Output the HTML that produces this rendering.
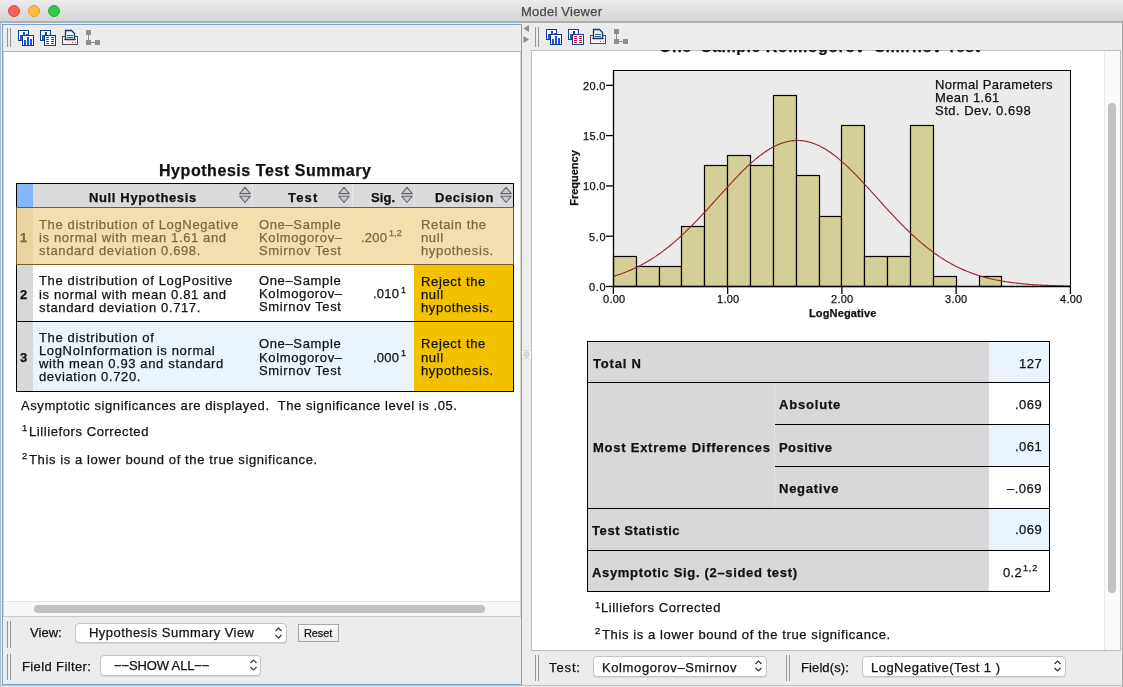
<!DOCTYPE html>
<html><head><meta charset="utf-8"><style>
*{box-sizing:border-box;margin:0;padding:0}
html,body{width:1123px;height:687px;overflow:hidden;background:#ececec;font-family:"Liberation Sans",sans-serif;color:#111}
.a{position:absolute}
.t{position:absolute;white-space:pre;line-height:1;will-change:transform;-webkit-text-stroke:0.25px currentColor}
.dot{position:absolute;top:5px;width:12px;height:12px;border-radius:50%}
.grip{position:absolute;width:4px;border-left:1px solid #959595;border-right:1px solid #959595}
</style></head><body>
<div class="a" style="left:0;top:0;width:1123px;height:23px;background:linear-gradient(#ececec,#d6d6d6 90%);border-bottom:2px solid #b0b0b0;border-radius:5px 5px 0 0"></div>
<div class="a" style="left:1122px;top:22px;width:1px;height:665px;background:#a8a8a8"></div>
<div class="dot" style="left:8px;background:#fc605c;border:1px solid #df4744"></div>
<div class="dot" style="left:28px;background:#fdbc40;border:1px solid #de9f34"></div>
<div class="dot" style="left:48px;background:#34c84a;border:1px solid #27a83a"></div>
<div class="a" style="left:0;top:23px;width:1px;height:664px;background:#b8b8b8"></div>
<div class="a" style="left:2px;top:24px;width:520px;height:661px;border:1px solid #72a3d6;background:#ececec"></div>
<div class="grip" style="left:7px;top:28px;height:19px"></div>
<div class="a" style="left:3px;top:51px;width:518px;height:1px;background:#b5b5b5"></div>
<div class="a" style="left:3px;top:52px;width:518px;height:549px;background:#fff"></div>
<div class="a" style="left:3px;top:601px;width:518px;height:16px;background:#f7f7f7;border-top:1px solid #e6e6e6"></div>
<div class="a" style="left:3px;top:52px;width:1px;height:565px;background:#d6d2d0"></div>
<div class="a" style="left:520px;top:52px;width:1px;height:565px;background:#d6d2d0"></div>
<div class="a" style="left:34px;top:605px;width:451px;height:8px;border-radius:4px;background:#c2c2c2"></div>
<div class="a" style="left:3px;top:616px;width:518px;height:1px;background:#c9c9c9"></div>
<svg class="a" width="90" height="22" viewBox="0 0 90 22" style="left:16px;top:27px" shape-rendering="crispEdges">
<rect x="2.5" y="3.5" width="10" height="10" fill="#fff" stroke="#0d3d91" stroke-width="1.3"/>
<rect x="4" y="8" width="2" height="5" fill="#1f52d6"/><rect x="7" y="5" width="2" height="8" fill="#1f52d6"/><rect x="10" y="7" width="2" height="6" fill="#1f52d6"/>
<rect x="6.5" y="8.5" width="11" height="10" fill="#fff" stroke="#0d3d91" stroke-width="1.3"/>
<rect x="8" y="13" width="2" height="5" fill="#1f52d6"/><rect x="11" y="10" width="2" height="8" fill="#1f52d6"/><rect x="14" y="12" width="2" height="6" fill="#1f52d6"/>
<rect x="24.5" y="3.5" width="10" height="10" fill="#eef8ff" stroke="#0d3d91" stroke-width="1.3"/>
<rect x="26" y="8" width="2" height="5" fill="#3a4fb0"/><rect x="29" y="5" width="2" height="8" fill="#1e3f70"/>
<rect x="28.5" y="8.5" width="11" height="10" fill="#f3fbff" stroke="#0d3d91" stroke-width="1.3"/>
<rect x="30" y="10" width="3" height="1.2" fill="#d4143c"/><rect x="35" y="10" width="3" height="1.2" fill="#d4143c"/>
<rect x="30" y="12" width="3" height="1.2" fill="#d4143c"/><rect x="35" y="12" width="3" height="1.2" fill="#d4143c"/>
<rect x="30" y="14" width="3" height="1.2" fill="#d4143c"/><rect x="35" y="14" width="3" height="1.2" fill="#d4143c"/>
<rect x="30" y="16" width="3" height="1.2" fill="#d4143c"/><rect x="35" y="16" width="3" height="1.2" fill="#d4143c"/>
<rect x="46.5" y="9.5" width="15" height="8" fill="#f4f2f0" stroke="#584c4a" stroke-width="1.2"/>
<rect x="48" y="12" width="12" height="1" fill="#6a5e5c"/>
<path d="M49.5 3.5 H55.5 L58.5 6.5 V12.5 H49.5 Z" fill="#e8eef8" stroke="#0f3e6a" stroke-width="1.3" shape-rendering="auto"/>
<rect x="51" y="8" width="6" height="0.8" fill="#3b5f86"/><rect x="51" y="10" width="6" height="0.8" fill="#3b5f86"/>
<rect x="56" y="14.5" width="1.2" height="1.2" fill="#f02020"/><rect x="58.5" y="14.8" width="1.6" height="0.8" fill="#30b030"/>
<rect x="70" y="3" width="5" height="5" fill="#8e8e8e"/><rect x="72" y="8" width="1" height="5" fill="#8e8e8e"/>
<rect x="70" y="13" width="5" height="5" fill="#8e8e8e"/><rect x="75" y="15" width="4" height="1" fill="#8e8e8e"/>
<rect x="79" y="13" width="5" height="5" fill="#8e8e8e"/>
</svg>
<div class="grip" style="left:7px;top:621px;height:27px"></div>
<div class="grip" style="left:7px;top:654px;height:26px"></div>
<div class="a" style="left:531px;top:50px;width:590px;height:601px;border:1px solid #bdbdbd;background:#fff"></div>
<div class="grip" style="left:535px;top:27px;height:20px"></div>
<svg class="a" width="90" height="22" viewBox="0 0 90 22" style="left:544px;top:26px" shape-rendering="crispEdges">
<rect x="2.5" y="3.5" width="10" height="10" fill="#fff" stroke="#0d3d91" stroke-width="1.3"/>
<rect x="4" y="8" width="2" height="5" fill="#1f52d6"/><rect x="7" y="5" width="2" height="8" fill="#1f52d6"/><rect x="10" y="7" width="2" height="6" fill="#1f52d6"/>
<rect x="6.5" y="8.5" width="11" height="10" fill="#fff" stroke="#0d3d91" stroke-width="1.3"/>
<rect x="8" y="13" width="2" height="5" fill="#1f52d6"/><rect x="11" y="10" width="2" height="8" fill="#1f52d6"/><rect x="14" y="12" width="2" height="6" fill="#1f52d6"/>
<rect x="24.5" y="3.5" width="10" height="10" fill="#eef8ff" stroke="#0d3d91" stroke-width="1.3"/>
<rect x="26" y="8" width="2" height="5" fill="#3a4fb0"/><rect x="29" y="5" width="2" height="8" fill="#1e3f70"/>
<rect x="28.5" y="8.5" width="11" height="10" fill="#f3fbff" stroke="#0d3d91" stroke-width="1.3"/>
<rect x="30" y="10" width="3" height="1.2" fill="#d4143c"/><rect x="35" y="10" width="3" height="1.2" fill="#d4143c"/>
<rect x="30" y="12" width="3" height="1.2" fill="#d4143c"/><rect x="35" y="12" width="3" height="1.2" fill="#d4143c"/>
<rect x="30" y="14" width="3" height="1.2" fill="#d4143c"/><rect x="35" y="14" width="3" height="1.2" fill="#d4143c"/>
<rect x="30" y="16" width="3" height="1.2" fill="#d4143c"/><rect x="35" y="16" width="3" height="1.2" fill="#d4143c"/>
<rect x="46.5" y="9.5" width="15" height="8" fill="#f4f2f0" stroke="#584c4a" stroke-width="1.2"/>
<rect x="48" y="12" width="12" height="1" fill="#6a5e5c"/>
<path d="M49.5 3.5 H55.5 L58.5 6.5 V12.5 H49.5 Z" fill="#e8eef8" stroke="#0f3e6a" stroke-width="1.3" shape-rendering="auto"/>
<rect x="51" y="8" width="6" height="0.8" fill="#3b5f86"/><rect x="51" y="10" width="6" height="0.8" fill="#3b5f86"/>
<rect x="56" y="14.5" width="1.2" height="1.2" fill="#f02020"/><rect x="58.5" y="14.8" width="1.6" height="0.8" fill="#30b030"/>
<rect x="70" y="3" width="5" height="5" fill="#8e8e8e"/><rect x="72" y="8" width="1" height="5" fill="#8e8e8e"/>
<rect x="70" y="13" width="5" height="5" fill="#8e8e8e"/><rect x="75" y="15" width="4" height="1" fill="#8e8e8e"/>
<rect x="79" y="13" width="5" height="5" fill="#8e8e8e"/>
</svg>
<div class="grip" style="left:535px;top:655px;height:26px"></div>
<div class="grip" style="left:786px;top:655px;height:26px"></div>
<div class="a" style="left:0;top:685px;width:1123px;height:1px;background:#c0c0c0"></div>
<div class="a" style="left:16px;top:183px;width:498px;height:1px;background:#000;"></div>
<div class="a" style="left:16px;top:184px;width:1px;height:24px;background:#000;"></div>
<div class="a" style="left:513px;top:184px;width:1px;height:24px;background:#000;"></div>
<div class="a" style="left:17px;top:184px;width:16px;height:23px;background:#83b7fb;"></div>
<div class="a" style="left:33px;top:184px;width:480px;height:23px;background:#d9dadc;"></div>
<div class="a" style="left:252px;top:184px;width:1px;height:23px;background:#e6e6e8;"></div>
<div class="a" style="left:352px;top:184px;width:1px;height:23px;background:#e6e6e8;"></div>
<div class="a" style="left:414px;top:184px;width:1px;height:23px;background:#e6e6e8;"></div>
<div class="a" style="left:16px;top:207px;width:498px;height:1px;background:#7b5d2b;"></div>
<div class="a" style="left:16px;top:208px;width:1px;height:56px;background:#7b5d2b;"></div>
<div class="a" style="left:513px;top:208px;width:1px;height:56px;background:#7b5d2b;"></div>
<div class="a" style="left:17px;top:208px;width:16px;height:56px;background:#e8d3a2;"></div>
<div class="a" style="left:33px;top:208px;width:480px;height:56px;background:#f3dfae;"></div>
<div class="a" style="left:252px;top:208px;width:1px;height:56px;background:#f0dba9;"></div>
<div class="a" style="left:352px;top:208px;width:1px;height:56px;background:#f0dba9;"></div>
<div class="a" style="left:414px;top:208px;width:1px;height:56px;background:#f0dba9;"></div>
<div class="a" style="left:16px;top:264px;width:498px;height:1px;background:#7b5d2b;"></div>
<div class="a" style="left:16px;top:265px;width:1px;height:56px;background:#000;"></div>
<div class="a" style="left:513px;top:265px;width:1px;height:56px;background:#000;"></div>
<div class="a" style="left:17px;top:265px;width:16px;height:56px;background:#d8d8d8;"></div>
<div class="a" style="left:33px;top:265px;width:480px;height:56px;background:#ffffff;"></div>
<div class="a" style="left:414px;top:265px;width:99px;height:56px;background:#f2c200;"></div>
<div class="a" style="left:16px;top:321px;width:498px;height:1px;background:#000;"></div>
<div class="a" style="left:16px;top:322px;width:1px;height:70px;background:#000;"></div>
<div class="a" style="left:513px;top:322px;width:1px;height:70px;background:#000;"></div>
<div class="a" style="left:17px;top:322px;width:16px;height:69px;background:#d8d8d8;"></div>
<div class="a" style="left:33px;top:322px;width:480px;height:69px;background:#eaf4fd;"></div>
<div class="a" style="left:414px;top:322px;width:99px;height:69px;background:#f2c200;"></div>
<div class="a" style="left:16px;top:391px;width:498px;height:1px;background:#000;"></div>
<div class="a" style="left:1104px;top:51px;width:16px;height:599px;background:#fafafa;border-left:1px solid #e8e8e8;"></div>
<div class="a" style="left:1108px;top:103px;width:8px;height:490px;background:#c2c2c2;border-radius:4px;"></div>
<div class="a" style="left:587px;top:341px;width:463px;height:1px;background:#000;"></div>
<div class="a" style="left:587px;top:341px;width:1px;height:251px;background:#000;"></div>
<div class="a" style="left:1049px;top:341px;width:1px;height:251px;background:#000;"></div>
<div class="a" style="left:588px;top:342px;width:401px;height:249px;background:#d8d8da;"></div>
<div class="a" style="left:989px;top:342px;width:60px;height:40px;background:#eaf4fe;"></div>
<div class="a" style="left:989px;top:383px;width:60px;height:41px;background:#fff;"></div>
<div class="a" style="left:989px;top:425px;width:60px;height:41px;background:#eaf4fe;"></div>
<div class="a" style="left:989px;top:467px;width:60px;height:41px;background:#fff;"></div>
<div class="a" style="left:989px;top:509px;width:60px;height:41px;background:#eaf4fe;"></div>
<div class="a" style="left:989px;top:551px;width:60px;height:40px;background:#fff;"></div>
<div class="a" style="left:587px;top:382px;width:463px;height:1px;background:#000;"></div>
<div class="a" style="left:775px;top:424px;width:274px;height:1px;background:#000;"></div>
<div class="a" style="left:775px;top:466px;width:274px;height:1px;background:#000;"></div>
<div class="a" style="left:587px;top:508px;width:463px;height:1px;background:#000;"></div>
<div class="a" style="left:587px;top:550px;width:463px;height:1px;background:#000;"></div>
<div class="a" style="left:587px;top:591px;width:463px;height:1px;background:#000;"></div>
<div class="a" style="left:774px;top:383px;width:1px;height:125px;background:#e2e2e4;"></div>
<svg class="a" style="left:239px;top:186px" width="12" height="18" viewBox="0 0 12 18"><path d="M6 1.3 L11.3 7.6 H0.7 Z" fill="#d4c6d8" stroke="#6a6270" stroke-width="1.1" stroke-linejoin="round"/><path d="M0.7 10.2 H11.3 L6 16.5 Z" fill="#d4c6d8" stroke="#6a6270" stroke-width="1.1" stroke-linejoin="round"/></svg>
<svg class="a" style="left:338px;top:186px" width="12" height="18" viewBox="0 0 12 18"><path d="M6 1.3 L11.3 7.6 H0.7 Z" fill="#d4c6d8" stroke="#6a6270" stroke-width="1.1" stroke-linejoin="round"/><path d="M0.7 10.2 H11.3 L6 16.5 Z" fill="#d4c6d8" stroke="#6a6270" stroke-width="1.1" stroke-linejoin="round"/></svg>
<svg class="a" style="left:401px;top:186px" width="12" height="18" viewBox="0 0 12 18"><path d="M6 1.3 L11.3 7.6 H0.7 Z" fill="#d4c6d8" stroke="#6a6270" stroke-width="1.1" stroke-linejoin="round"/><path d="M0.7 10.2 H11.3 L6 16.5 Z" fill="#d4c6d8" stroke="#6a6270" stroke-width="1.1" stroke-linejoin="round"/></svg>
<svg class="a" style="left:500px;top:186px" width="12" height="18" viewBox="0 0 12 18"><path d="M6 1.3 L11.3 7.6 H0.7 Z" fill="#d4c6d8" stroke="#6a6270" stroke-width="1.1" stroke-linejoin="round"/><path d="M0.7 10.2 H11.3 L6 16.5 Z" fill="#d4c6d8" stroke="#6a6270" stroke-width="1.1" stroke-linejoin="round"/></svg>
<div class="a" style="left:75px;top:623px;width:212px;height:20px;background:#fff;border:1px solid #c4c4c4;border-radius:4px;box-shadow:0 1px 0 #d8d8d8"></div>
<svg class="a" style="left:274px;top:626px" width="9" height="14" viewBox="0 0 9 14"><path d="M1.5 5 L4.5 2 L7.5 5 M1.5 9 L4.5 12 L7.5 9" fill="none" stroke="#333" stroke-width="1.2"/></svg>
<div class="a" style="left:298px;top:624px;width:41px;height:18px;background:linear-gradient(#fafafa,#ececec);border:1px solid #a9a9a9"></div>
<div class="a" style="left:100px;top:655px;width:161px;height:21px;background:#fff;border:1px solid #c4c4c4;border-radius:4px;box-shadow:0 1px 0 #d8d8d8"></div>
<svg class="a" style="left:249px;top:658px" width="9" height="14" viewBox="0 0 9 14"><path d="M1.5 5 L4.5 2 L7.5 5 M1.5 9 L4.5 12 L7.5 9" fill="none" stroke="#333" stroke-width="1.2"/></svg>
<svg class="a" style="left:522px;top:24px" width="9" height="21" viewBox="0 0 9 21"><path d="M7 1 V8 L1.5 4.5 Z" fill="#8c8c8c"/><path d="M1.5 12 V19 L7 15.5 Z" fill="#8c8c8c"/></svg>
<div class="a" style="left:522px;top:350px;width:9px;height:9px;background:#fff;border-top:1px solid #ddd;border-bottom:1px solid #ddd"></div>
<div class="a" style="left:523px;top:351px;width:7px;height:7px;border-radius:50%;background:#d8d8d8"></div>
<svg class="a" style="left:0;top:0" width="1123" height="687" viewBox="0 0 1123 687">
<rect x="613.5" y="70.5" width="457" height="216" fill="#ebebeb" stroke="#000" stroke-width="1"/>
<rect x="613.50" y="256.50" width="23.00" height="30.00" fill="#d3cf97" stroke="#000" stroke-width="1.2"/>
<rect x="636.50" y="266.50" width="23.00" height="20.00" fill="#d3cf97" stroke="#000" stroke-width="1.2"/>
<rect x="659.50" y="266.50" width="22.00" height="20.00" fill="#d3cf97" stroke="#000" stroke-width="1.2"/>
<rect x="681.50" y="226.50" width="23.00" height="60.00" fill="#d3cf97" stroke="#000" stroke-width="1.2"/>
<rect x="704.50" y="165.50" width="23.00" height="121.00" fill="#d3cf97" stroke="#000" stroke-width="1.2"/>
<rect x="727.50" y="155.50" width="23.00" height="131.00" fill="#d3cf97" stroke="#000" stroke-width="1.2"/>
<rect x="750.50" y="165.50" width="23.00" height="121.00" fill="#d3cf97" stroke="#000" stroke-width="1.2"/>
<rect x="773.50" y="95.50" width="23.00" height="191.00" fill="#d3cf97" stroke="#000" stroke-width="1.2"/>
<rect x="796.50" y="175.50" width="23.00" height="111.00" fill="#d3cf97" stroke="#000" stroke-width="1.2"/>
<rect x="819.50" y="216.50" width="22.00" height="70.00" fill="#d3cf97" stroke="#000" stroke-width="1.2"/>
<rect x="841.50" y="125.50" width="23.00" height="161.00" fill="#d3cf97" stroke="#000" stroke-width="1.2"/>
<rect x="864.50" y="256.50" width="23.00" height="30.00" fill="#d3cf97" stroke="#000" stroke-width="1.2"/>
<rect x="887.50" y="256.50" width="23.00" height="30.00" fill="#d3cf97" stroke="#000" stroke-width="1.2"/>
<rect x="910.50" y="125.50" width="23.00" height="161.00" fill="#d3cf97" stroke="#000" stroke-width="1.2"/>
<rect x="933.50" y="276.50" width="23.00" height="10.00" fill="#d3cf97" stroke="#000" stroke-width="1.2"/>
<rect x="979.50" y="276.50" width="22.00" height="10.00" fill="#d3cf97" stroke="#000" stroke-width="1.2"/>
<polyline points="613.40,276.29 614.54,275.94 615.68,275.59 616.83,275.23 617.97,274.86 619.11,274.48 620.25,274.09 621.40,273.69 622.54,273.28 623.68,272.86 624.82,272.43 625.97,271.99 627.11,271.54 628.25,271.08 629.39,270.60 630.54,270.12 631.68,269.62 632.82,269.11 633.96,268.59 635.11,268.06 636.25,267.52 637.39,266.96 638.53,266.39 639.68,265.81 640.82,265.22 641.96,264.62 643.11,264.00 644.25,263.37 645.39,262.73 646.53,262.07 647.67,261.40 648.82,260.72 649.96,260.03 651.10,259.32 652.25,258.60 653.39,257.87 654.53,257.12 655.67,256.36 656.81,255.58 657.96,254.80 659.10,254.00 660.24,253.18 661.38,252.35 662.53,251.51 663.67,250.66 664.81,249.79 665.95,248.91 667.10,248.02 668.24,247.11 669.38,246.19 670.52,245.26 671.67,244.31 672.81,243.35 673.95,242.38 675.10,241.40 676.24,240.40 677.38,239.39 678.52,238.37 679.66,237.34 680.81,236.29 681.95,235.23 683.09,234.17 684.24,233.09 685.38,232.00 686.52,230.89 687.66,229.78 688.80,228.66 689.95,227.53 691.09,226.38 692.23,225.23 693.38,224.07 694.52,222.90 695.66,221.72 696.80,220.53 697.94,219.34 699.09,218.13 700.23,216.92 701.37,215.71 702.51,214.48 703.66,213.25 704.80,212.02 705.94,210.78 707.08,209.53 708.23,208.28 709.37,207.03 710.51,205.77 711.65,204.51 712.80,203.24 713.94,201.98 715.08,200.71 716.23,199.44 717.37,198.17 718.51,196.90 719.65,195.64 720.79,194.37 721.94,193.10 723.08,191.84 724.22,190.58 725.37,189.32 726.51,188.06 727.65,186.81 728.79,185.57 729.93,184.33 731.08,183.09 732.22,181.86 733.36,180.64 734.50,179.43 735.65,178.23 736.79,177.03 737.93,175.85 739.08,174.67 740.22,173.50 741.36,172.35 742.50,171.21 743.64,170.08 744.79,168.96 745.93,167.86 747.07,166.77 748.21,165.70 749.36,164.64 750.50,163.60 751.64,162.57 752.78,161.56 753.93,160.57 755.07,159.60 756.21,158.64 757.36,157.71 758.50,156.79 759.64,155.90 760.78,155.02 761.92,154.17 763.07,153.34 764.21,152.53 765.35,151.75 766.50,150.98 767.64,150.24 768.78,149.53 769.92,148.84 771.06,148.17 772.21,147.53 773.35,146.92 774.49,146.33 775.63,145.77 776.78,145.23 777.92,144.72 779.06,144.24 780.20,143.79 781.35,143.36 782.49,142.97 783.63,142.60 784.77,142.26 785.92,141.95 787.06,141.66 788.20,141.41 789.35,141.19 790.49,140.99 791.63,140.83 792.77,140.69 793.91,140.59 795.06,140.52 796.20,140.47 797.34,140.46 798.49,140.47 799.63,140.52 800.77,140.59 801.91,140.69 803.05,140.83 804.20,140.99 805.34,141.19 806.48,141.41 807.62,141.66 808.77,141.95 809.91,142.26 811.05,142.60 812.19,142.97 813.34,143.36 814.48,143.79 815.62,144.24 816.76,144.72 817.91,145.23 819.05,145.77 820.19,146.33 821.34,146.92 822.48,147.53 823.62,148.17 824.76,148.84 825.90,149.53 827.05,150.24 828.19,150.98 829.33,151.75 830.47,152.53 831.62,153.34 832.76,154.17 833.90,155.02 835.04,155.90 836.19,156.79 837.33,157.71 838.47,158.64 839.62,159.60 840.76,160.57 841.90,161.56 843.04,162.57 844.18,163.60 845.33,164.64 846.47,165.70 847.61,166.77 848.75,167.86 849.90,168.96 851.04,170.08 852.18,171.21 853.33,172.35 854.47,173.50 855.61,174.67 856.75,175.85 857.89,177.03 859.04,178.23 860.18,179.43 861.32,180.64 862.47,181.86 863.61,183.09 864.75,184.33 865.89,185.57 867.03,186.81 868.18,188.06 869.32,189.32 870.46,190.58 871.61,191.84 872.75,193.10 873.89,194.37 875.03,195.64 876.17,196.90 877.32,198.17 878.46,199.44 879.60,200.71 880.74,201.98 881.89,203.24 883.03,204.51 884.17,205.77 885.31,207.03 886.46,208.28 887.60,209.53 888.74,210.78 889.88,212.02 891.03,213.25 892.17,214.48 893.31,215.71 894.45,216.92 895.60,218.13 896.74,219.34 897.88,220.53 899.02,221.72 900.17,222.90 901.31,224.07 902.45,225.23 903.60,226.38 904.74,227.53 905.88,228.66 907.02,229.78 908.16,230.89 909.31,232.00 910.45,233.09 911.59,234.17 912.74,235.23 913.88,236.29 915.02,237.34 916.16,238.37 917.31,239.39 918.45,240.40 919.59,241.40 920.73,242.38 921.88,243.35 923.02,244.31 924.16,245.26 925.30,246.19 926.44,247.11 927.59,248.02 928.73,248.91 929.87,249.79 931.01,250.66 932.16,251.51 933.30,252.35 934.44,253.18 935.59,254.00 936.73,254.80 937.87,255.58 939.01,256.36 940.15,257.12 941.30,257.87 942.44,258.60 943.58,259.32 944.72,260.03 945.87,260.72 947.01,261.40 948.15,262.07 949.29,262.73 950.44,263.37 951.58,264.00 952.72,264.62 953.87,265.22 955.01,265.81 956.15,266.39 957.29,266.96 958.43,267.52 959.58,268.06 960.72,268.59 961.86,269.11 963.00,269.62 964.15,270.12 965.29,270.60 966.43,271.08 967.58,271.54 968.72,271.99 969.86,272.43 971.00,272.86 972.14,273.28 973.29,273.69 974.43,274.09 975.57,274.48 976.71,274.86 977.86,275.23 979.00,275.59 980.14,275.94 981.29,276.29 982.43,276.62 983.57,276.94 984.71,277.26 985.86,277.57 987.00,277.86 988.14,278.15 989.28,278.44 990.42,278.71 991.57,278.98 992.71,279.24 993.85,279.49 994.99,279.73 996.14,279.97 997.28,280.20 998.42,280.42 999.56,280.64 1000.71,280.85 1001.85,281.05 1002.99,281.25 1004.13,281.44 1005.28,281.62 1006.42,281.80 1007.56,281.98 1008.70,282.14 1009.85,282.31 1010.99,282.46 1012.13,282.62 1013.27,282.76 1014.42,282.91 1015.56,283.04 1016.70,283.18 1017.85,283.31 1018.99,283.43 1020.13,283.55 1021.27,283.67 1022.41,283.78 1023.56,283.89 1024.70,283.99 1025.84,284.09 1026.99,284.19 1028.13,284.28 1029.27,284.37 1030.41,284.46 1031.56,284.54 1032.70,284.62 1033.84,284.70 1034.98,284.78 1036.12,284.85 1037.27,284.92 1038.41,284.99 1039.55,285.05 1040.69,285.11 1041.84,285.17 1042.98,285.23 1044.12,285.28 1045.26,285.34 1046.41,285.39 1047.55,285.44 1048.69,285.48 1049.84,285.53 1050.98,285.57 1052.12,285.61 1053.26,285.65 1054.40,285.69 1055.55,285.73 1056.69,285.76 1057.83,285.80 1058.97,285.83 1060.12,285.86 1061.26,285.89 1062.40,285.92 1063.55,285.94 1064.69,285.97 1065.83,286.00 1066.97,286.02 1068.12,286.04 1069.26,286.06 1070.40,286.08" fill="none" stroke="#982b2b" stroke-width="1.15"/>
<line x1="613.5" y1="70" x2="613.5" y2="287" stroke="#000" stroke-width="1.3"/>
<line x1="613" y1="286.5" x2="1071" y2="286.5" stroke="#000" stroke-width="1.3"/>
<line x1="606" y1="286.50" x2="613.5" y2="286.50" stroke="#000" stroke-width="1.3"/>
<line x1="606" y1="236.20" x2="613.5" y2="236.20" stroke="#000" stroke-width="1.3"/>
<line x1="606" y1="185.90" x2="613.5" y2="185.90" stroke="#000" stroke-width="1.3"/>
<line x1="606" y1="135.60" x2="613.5" y2="135.60" stroke="#000" stroke-width="1.3"/>
<line x1="606" y1="85.30" x2="613.5" y2="85.30" stroke="#000" stroke-width="1.3"/>
<line x1="613.40" y1="286.5" x2="613.40" y2="294" stroke="#000" stroke-width="1.3"/>
<line x1="727.65" y1="286.5" x2="727.65" y2="294" stroke="#000" stroke-width="1.3"/>
<line x1="841.90" y1="286.5" x2="841.90" y2="294" stroke="#000" stroke-width="1.3"/>
<line x1="956.15" y1="286.5" x2="956.15" y2="294" stroke="#000" stroke-width="1.3"/>
<line x1="1070.40" y1="286.5" x2="1070.40" y2="294" stroke="#000" stroke-width="1.3"/>
</svg>
<div class="t" style="left:547.5px;top:170.5px;width:56px;height:14px;font-size:11px;font-weight:bold;letter-spacing:0px;transform:rotate(-90deg);transform-origin:28px 7px;text-align:center">Frequency</div>
<div class="a" style="left:593px;top:656px;width:174px;height:21px;background:#fff;border:1px solid #c4c4c4;border-radius:4px;box-shadow:0 1px 0 #d8d8d8"></div>
<svg class="a" style="left:754px;top:659px" width="9" height="14" viewBox="0 0 9 14"><path d="M1.5 5 L4.5 2 L7.5 5 M1.5 9 L4.5 12 L7.5 9" fill="none" stroke="#333" stroke-width="1.2"/></svg>
<div class="a" style="left:862px;top:656px;width:204px;height:21px;background:#fff;border:1px solid #c4c4c4;border-radius:4px;box-shadow:0 1px 0 #d8d8d8"></div>
<svg class="a" style="left:1053px;top:659px" width="9" height="14" viewBox="0 0 9 14"><path d="M1.5 5 L4.5 2 L7.5 5 M1.5 9 L4.5 12 L7.5 9" fill="none" stroke="#333" stroke-width="1.2"/></svg>

<div class="t" style="left:520.50px;top:5.00px;font-size:13px;color:#4a4a4a;letter-spacing:0.224px;">Model Viewer</div>
<div class="t" style="left:158.60px;top:163.46px;font-size:16px;font-weight:bold;letter-spacing:0.556px;">Hypothesis Test Summary</div>
<div class="t" style="left:88.50px;top:190.80px;font-size:13px;font-weight:bold;letter-spacing:0.639px;">Null Hypothesis</div>
<div class="t" style="left:287.60px;top:190.80px;font-size:13px;font-weight:bold;letter-spacing:1.178px;">Test</div>
<div class="t" style="left:371.20px;top:190.80px;font-size:13px;font-weight:bold;letter-spacing:0.119px;">Sig.</div>
<div class="t" style="left:434.50px;top:190.80px;font-size:13px;font-weight:bold;letter-spacing:0.616px;">Decision</div>
<div class="t" style="left:20.00px;top:231.30px;font-size:13px;font-weight:bold;color:#7c6a3b;">1</div>
<div class="t" style="left:20.00px;top:287.80px;font-size:13px;font-weight:bold;">2</div>
<div class="t" style="left:20.00px;top:351.00px;font-size:13px;font-weight:bold;">3</div>
<div class="t" style="left:39.40px;top:217.60px;font-size:13px;color:#7c6a3b;letter-spacing:0.640px;">The distribution of LogNegative</div>
<div class="t" style="left:39.40px;top:230.80px;font-size:13px;color:#7c6a3b;letter-spacing:0.640px;">is normal with mean 1.61 and</div>
<div class="t" style="left:39.40px;top:244.00px;font-size:13px;color:#7c6a3b;letter-spacing:0.640px;">standard deviation 0.698.</div>
<div class="t" style="left:259.30px;top:217.90px;font-size:13px;color:#7c6a3b;letter-spacing:0.640px;">One–Sample</div>
<div class="t" style="left:259.30px;top:231.10px;font-size:13px;color:#7c6a3b;letter-spacing:0.640px;">Kolmogorov–</div>
<div class="t" style="left:259.30px;top:244.30px;font-size:13px;color:#7c6a3b;letter-spacing:0.640px;">Smirnov Test</div>
<div class="t" style="left:360.90px;top:230.80px;font-size:13px;color:#7c6a3b;letter-spacing:0.229px;">.200</div>
<div class="t" style="left:389.20px;top:229.28px;font-size:9px;color:#7c6a3b;letter-spacing:0.092px;">1,2</div>
<div class="t" style="left:421.40px;top:217.70px;font-size:13px;color:#7c6a3b;letter-spacing:0.640px;">Retain the</div>
<div class="t" style="left:421.40px;top:230.80px;font-size:13px;color:#7c6a3b;letter-spacing:0.640px;">null</div>
<div class="t" style="left:421.40px;top:243.90px;font-size:13px;color:#7c6a3b;letter-spacing:0.640px;">hypothesis.</div>
<div class="t" style="left:39.40px;top:274.40px;font-size:13px;letter-spacing:0.640px;">The distribution of LogPositive</div>
<div class="t" style="left:39.40px;top:287.50px;font-size:13px;letter-spacing:0.640px;">is normal with mean 0.81 and</div>
<div class="t" style="left:39.40px;top:300.60px;font-size:13px;letter-spacing:0.640px;">standard deviation 0.717.</div>
<div class="t" style="left:259.30px;top:274.20px;font-size:13px;letter-spacing:0.640px;">One–Sample</div>
<div class="t" style="left:259.30px;top:287.30px;font-size:13px;letter-spacing:0.640px;">Kolmogorov–</div>
<div class="t" style="left:259.30px;top:300.40px;font-size:13px;letter-spacing:0.640px;">Smirnov Test</div>
<div class="t" style="left:372.90px;top:286.90px;font-size:13px;letter-spacing:0.229px;">.010</div>
<div class="t" style="left:400.60px;top:286.08px;font-size:9px;">1</div>
<div class="t" style="left:421.40px;top:274.80px;font-size:13px;letter-spacing:0.640px;">Reject the</div>
<div class="t" style="left:421.40px;top:287.90px;font-size:13px;letter-spacing:0.640px;">null</div>
<div class="t" style="left:421.40px;top:301.00px;font-size:13px;letter-spacing:0.640px;">hypothesis.</div>
<div class="t" style="left:39.40px;top:330.60px;font-size:13px;letter-spacing:0.640px;">The distribution of</div>
<div class="t" style="left:39.40px;top:343.75px;font-size:13px;letter-spacing:0.640px;">LogNoInformation is normal</div>
<div class="t" style="left:39.40px;top:356.90px;font-size:13px;letter-spacing:0.640px;">with mean 0.93 and standard</div>
<div class="t" style="left:39.40px;top:370.05px;font-size:13px;letter-spacing:0.640px;">deviation 0.720.</div>
<div class="t" style="left:259.30px;top:337.40px;font-size:13px;letter-spacing:0.640px;">One–Sample</div>
<div class="t" style="left:259.30px;top:350.70px;font-size:13px;letter-spacing:0.640px;">Kolmogorov–</div>
<div class="t" style="left:259.30px;top:364.00px;font-size:13px;letter-spacing:0.640px;">Smirnov Test</div>
<div class="t" style="left:372.90px;top:350.80px;font-size:13px;letter-spacing:0.229px;">.000</div>
<div class="t" style="left:400.60px;top:349.08px;font-size:9px;">1</div>
<div class="t" style="left:421.40px;top:337.40px;font-size:13px;letter-spacing:0.640px;">Reject the</div>
<div class="t" style="left:421.40px;top:350.70px;font-size:13px;letter-spacing:0.640px;">null</div>
<div class="t" style="left:421.40px;top:364.00px;font-size:13px;letter-spacing:0.640px;">hypothesis.</div>
<div class="t" style="left:21.00px;top:399.00px;font-size:13px;letter-spacing:0.575px;">Asymptotic significances are displayed.  The significance level is .05.</div>
<div class="t" style="left:22.30px;top:423.26px;font-size:9.5px;">1</div>
<div class="t" style="left:28.90px;top:424.90px;font-size:13px;letter-spacing:0.580px;">Lilliefors Corrected</div>
<div class="t" style="left:22.00px;top:450.76px;font-size:9.5px;">2</div>
<div class="t" style="left:29.40px;top:452.50px;font-size:13px;letter-spacing:0.608px;">This is a lower bound of the true significance.</div>
<div class="t" style="left:29.80px;top:625.70px;font-size:13px;letter-spacing:0.034px;">View:</div>
<div class="t" style="left:88.50px;top:625.70px;font-size:13px;letter-spacing:0.450px;">Hypothesis Summary View</div>
<div class="t" style="left:304.40px;top:627.69px;font-size:11px;letter-spacing:-0.112px;">Reset</div>
<div class="t" style="left:21.50px;top:659.50px;font-size:13px;letter-spacing:0.384px;">Field Filter:</div>
<div class="t" style="left:113.60px;top:659.30px;font-size:13px;letter-spacing:-0.131px;">−−SHOW ALL−−</div>
<div class="t" style="left:658.50px;top:39.26px;font-size:16px;font-weight:bold;letter-spacing:0.495px;clip-path:inset(11.5px 0 0 0);">One–Sample Kolmogorov–Smirnov Test</div>
<div class="t" style="left:588.70px;top:281.89px;font-size:11px;letter-spacing:0.602px;">0.0</div>
<div class="t" style="left:588.70px;top:231.59px;font-size:11px;letter-spacing:0.602px;">5.0</div>
<div class="t" style="left:582.70px;top:181.29px;font-size:11px;letter-spacing:0.359px;">10.0</div>
<div class="t" style="left:582.70px;top:130.99px;font-size:11px;letter-spacing:0.359px;">15.0</div>
<div class="t" style="left:582.70px;top:80.69px;font-size:11px;letter-spacing:0.359px;">20.0</div>
<div class="t" style="left:602.70px;top:294.39px;font-size:11px;letter-spacing:0.259px;">0.00</div>
<div class="t" style="left:716.95px;top:294.39px;font-size:11px;letter-spacing:0.259px;">1.00</div>
<div class="t" style="left:831.20px;top:294.39px;font-size:11px;letter-spacing:0.259px;">2.00</div>
<div class="t" style="left:945.45px;top:294.39px;font-size:11px;letter-spacing:0.259px;">3.00</div>
<div class="t" style="left:1059.70px;top:294.39px;font-size:11px;letter-spacing:0.259px;">4.00</div>
<div class="t" style="left:808.50px;top:307.59px;font-size:11px;font-weight:bold;letter-spacing:0.138px;">LogNegative</div>
<div class="t" style="left:935.30px;top:77.60px;font-size:13px;letter-spacing:0.306px;">Normal Parameters</div>
<div class="t" style="left:935.30px;top:90.60px;font-size:13px;letter-spacing:0.350px;">Mean 1.61</div>
<div class="t" style="left:935.30px;top:103.50px;font-size:13px;letter-spacing:0.500px;">Std. Dev. 0.698</div>
<div class="t" style="left:592.60px;top:357.10px;font-size:13px;font-weight:bold;letter-spacing:0.818px;">Total N</div>
<div class="t" style="left:592.60px;top:440.90px;font-size:13px;font-weight:bold;letter-spacing:0.753px;">Most Extreme Differences</div>
<div class="t" style="left:592.40px;top:523.50px;font-size:13px;font-weight:bold;letter-spacing:0.588px;">Test Statistic</div>
<div class="t" style="left:592.40px;top:565.60px;font-size:13px;font-weight:bold;letter-spacing:0.667px;">Asymptotic Sig. (2–sided test)</div>
<div class="t" style="left:779.20px;top:398.40px;font-size:13px;font-weight:bold;letter-spacing:0.811px;">Absolute</div>
<div class="t" style="left:779.20px;top:440.90px;font-size:13px;font-weight:bold;letter-spacing:0.449px;">Positive</div>
<div class="t" style="left:779.20px;top:482.20px;font-size:13px;font-weight:bold;letter-spacing:0.742px;">Negative</div>
<div class="t" style="left:1019.30px;top:357.20px;font-size:13px;letter-spacing:0.500px;">127</div>
<div class="t" style="left:1015.19px;top:397.60px;font-size:13px;letter-spacing:0.500px;">.069</div>
<div class="t" style="left:1015.19px;top:439.60px;font-size:13px;letter-spacing:0.500px;">.061</div>
<div class="t" style="left:1007.45px;top:482.00px;font-size:13px;letter-spacing:0.500px;">–.069</div>
<div class="t" style="left:1015.19px;top:523.20px;font-size:13px;letter-spacing:0.500px;">.069</div>
<div class="t" style="left:1003.20px;top:565.70px;font-size:13px;letter-spacing:0.361px;">0.2</div>
<div class="t" style="left:1023.40px;top:564.18px;font-size:9px;letter-spacing:0.842px;">1,2</div>
<div class="t" style="left:595.20px;top:599.76px;font-size:9.5px;">1</div>
<div class="t" style="left:601.00px;top:601.00px;font-size:13px;letter-spacing:0.580px;">Lilliefors Corrected</div>
<div class="t" style="left:595.00px;top:626.26px;font-size:9.5px;">2</div>
<div class="t" style="left:601.50px;top:627.60px;font-size:13px;letter-spacing:0.608px;">This is a lower bound of the true significance.</div>
<div class="t" style="left:549.40px;top:660.80px;font-size:13px;letter-spacing:0.883px;">Test:</div>
<div class="t" style="left:602.30px;top:660.80px;font-size:13px;letter-spacing:0.607px;">Kolmogorov–Smirnov</div>
<div class="t" style="left:800.80px;top:661.00px;font-size:13px;letter-spacing:0.106px;">Field(s):</div>
<div class="t" style="left:871.00px;top:661.00px;font-size:13px;letter-spacing:0.476px;">LogNegative(Test 1 )</div>
</body></html>
